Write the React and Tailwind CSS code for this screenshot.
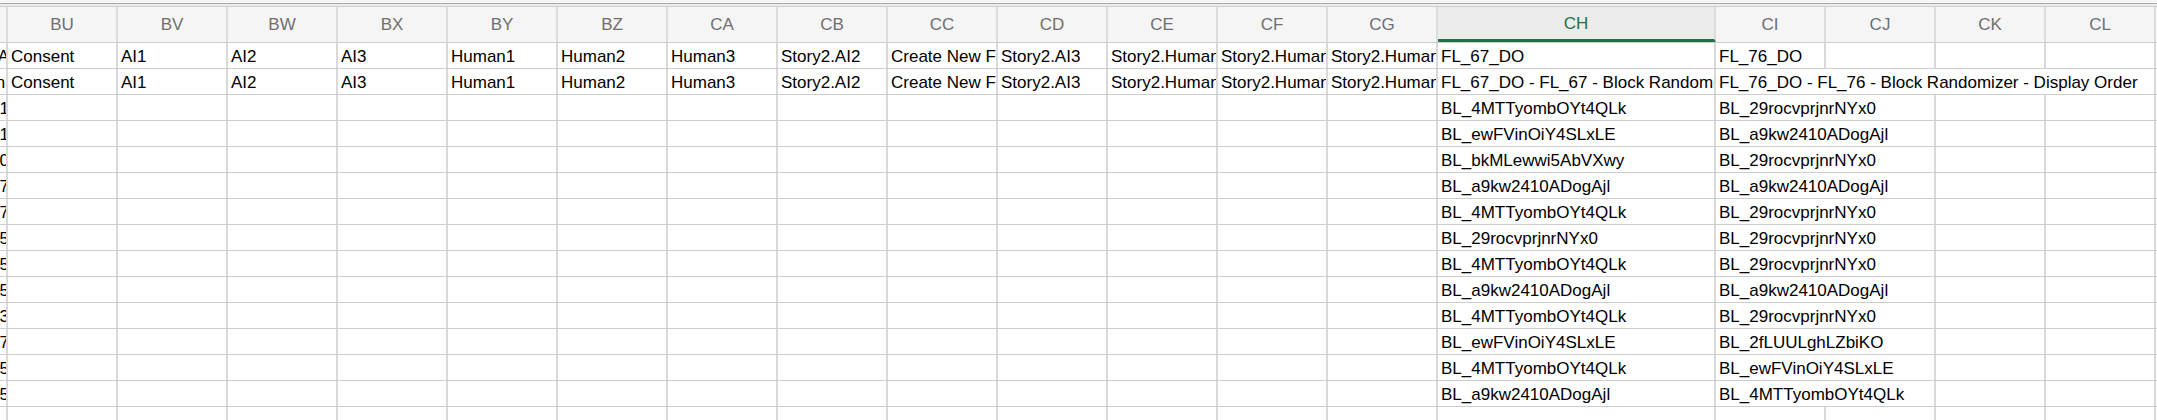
const columns = ['BU', 'BV', 'BW', 'BX', 'BY', 'BZ', 'CA', 'CB', 'CC', 'CD', 'CE', 'CF', 'CG', 'CH', 'CI', 'CJ', 'CK', 'CL']

const labels = ['Consent', 'AI1', 'AI2', 'AI3', 'Human1', 'Human2', 'Human3', 'Story2.AI2', 'Create New Form', 'Story2.AI3', 'Story2.Human1', 'Story2.Human2', 'Story2.Human3']

const blocks = [
  ['1', 'BL_4MTTyombOYt4QLk', 'BL_29rocvprjnrNYx0'],
  ['1', 'BL_ewFVinOiY4SLxLE', 'BL_a9kw2410ADogAjl'],
  ['0', 'BL_bkMLewwi5AbVXwy', 'BL_29rocvprjnrNYx0'],
  ['7', 'BL_a9kw2410ADogAjl', 'BL_a9kw2410ADogAjl'],
  ['7', 'BL_4MTTyombOYt4QLk', 'BL_29rocvprjnrNYx0'],
  ['5', 'BL_29rocvprjnrNYx0', 'BL_29rocvprjnrNYx0'],
  ['5', 'BL_4MTTyombOYt4QLk', 'BL_29rocvprjnrNYx0'],
  ['5', 'BL_a9kw2410ADogAjl', 'BL_a9kw2410ADogAjl'],
  ['3', 'BL_4MTTyombOYt4QLk', 'BL_29rocvprjnrNYx0'],
  ['7', 'BL_ewFVinOiY4SLxLE', 'BL_2fLUULghLZbiKO'],
  ['5', 'BL_4MTTyombOYt4QLk', 'BL_ewFVinOiY4SLxLE'],
  ['5', 'BL_a9kw2410ADogAjl', 'BL_4MTTyombOYt4QLk'],
  ['', '', ''],
]

const grid = 'grid grid-cols-[8px_repeat(13,110px)_278px_repeat(4,110px)_1fr]'
const cell = 'border-r-2 border-[#d9d9d9] overflow-hidden whitespace-nowrap flex items-end pl-[3px] leading-[20px] pb-[1px]'

// the sliver of column BT that is still on screen
function Edge({ text }) {
  return (
    <div className="border-r-2 border-[#d9d9d9] overflow-hidden whitespace-nowrap flex items-end justify-end leading-[20px] pb-[1px]">
      <span className="-mr-[3px]">{text}</span>
    </div>
  )
}

function Row({ children }) {
  return <div className={`${grid} h-[26px] border-b border-[#cdcdcd]`}>{children}</div>
}

export default function App() {
  return (
    <div className="w-[2157px] h-[420px] overflow-hidden bg-white text-[17px] text-black font-['Liberation_Sans',Arial,sans-serif]">
      {/* window chrome above the column letters */}
      <div className="h-[3px] bg-[#f6f6f6]" />
      <div className="h-px bg-[#a9a9a9]" />
      <div className="h-[2px] bg-[#ededed]" />
      <div className="h-px bg-[#cfcfcf]" />

      {/* column letters */}
      <div className={`${grid} h-[36px] bg-[#f5f5f5] border-b border-[#cdcdcd]`}>
        <div className="border-r-2 border-[#dcdcdc]" />
        {columns.map((c) =>
          c === 'CH' ? (
            <div key={c} className="border-r-2 border-[#dcdcdc] bg-[#ebebeb] border-b-[3px] border-b-[#1f7244] flex items-center justify-center pt-[2px] text-[#1f7244]">
              {c}
            </div>
          ) : (
            <div key={c} className="border-r-2 border-[#dcdcdc] flex items-center justify-center text-[#6f6f6f]">
              {c}
            </div>
          )
        )}
        <div />
      </div>

      {/* variable names */}
      <Row>
        <Edge text="A" />
        {labels.map((l, i) => (
          <div key={i} className={cell}>{l}</div>
        ))}
        <div className={cell}>FL_67_DO</div>
        <div className={cell}>FL_76_DO</div>
        <div className={cell} />
        <div className={cell} />
        <div className={cell} />
        <div />
      </Row>

      {/* question text */}
      <Row>
        <Edge text="ni" />
        {labels.map((l, i) => (
          <div key={i} className={cell}>{l}</div>
        ))}
        <div className={cell}>FL_67_DO - FL_67 - Block Randomizer - Display Order</div>
        <div className={`${cell} col-span-4`}>FL_76_DO - FL_76 - Block Randomizer - Display Order</div>
        <div />
      </Row>

      {blocks.map(([edge, a, b], r) => (
        <Row key={r}>
          <Edge text={edge} />
          {labels.map((_, i) => (
            <div key={i} className={cell} />
          ))}
          <div className={cell}>{a}</div>
          {b ? (
            <div className={`${cell} col-span-2`}>{b}</div>
          ) : (
            <>
              <div className={cell} />
              <div className={cell} />
            </>
          )}
          <div className={cell} />
          <div className={cell} />
          <div />
        </Row>
      ))}
    </div>
  )
}
